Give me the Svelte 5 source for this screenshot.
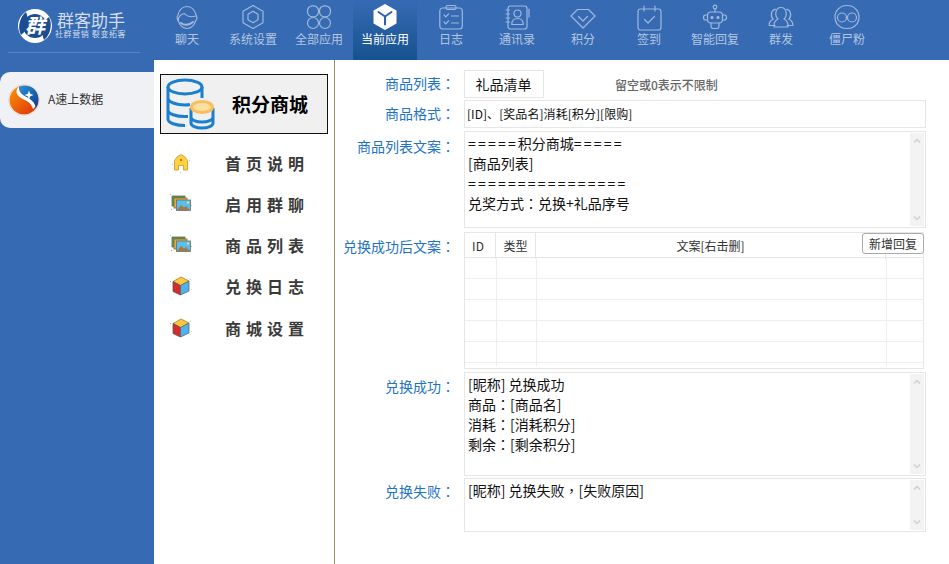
<script>
  const nav = [
    { id: 'chat', label: '聊天' }, { id: 'hex', label: '系统设置' }, { id: 'apps', label: '全部应用' },
    { id: 'cube', label: '当前应用', active: true }, { id: 'log', label: '日志' }, { id: 'book', label: '通讯录' },
    { id: 'gem', label: '积分' }, { id: 'cal', label: '签到' }, { id: 'bot', label: '智能回复' },
    { id: 'group', label: '群发' }, { id: 'skull', label: '僵尸粉' }
  ];
  const menu = [
    { icon: 'home', label: '首页说明' }, { icon: 'pics', label: '启用群聊' }, { icon: 'pics', label: '商品列表' },
    { icon: 'box', label: '兑换日志' }, { icon: 'box', label: '商城设置' }
  ];
  const rows = [1, 2, 3, 4, 5, 6];
</script>

<div class="app">
  <header class="top">
    <div class="brand">
      <div class="brand-in">
        <svg class="logo" width="36" height="36" viewBox="0 0 36 36">
          <circle cx="18" cy="18" r="17" fill="#fff" />
          <path d="M9 4C3 9 0 19 4 27c4-3 6-6 5-10 2-4 2-9 0-13zM27 32c6-5 9-15 5-23-4 3-6 6-5 10-2 4-2 9 0 13z" fill="#1c4d92" />
          <circle cx="18" cy="18" r="12" fill="#1c4d92" />
          <text x="18" y="25" text-anchor="middle" class="logo-ch">群</text>
        </svg>
        <div class="brand-text">
          <div class="brand-name">群客助手</div>
          <div class="brand-sub">社群营销 裂变拓客</div>
        </div>
      </div>
    </div>
    <nav class="nav">
      {#each nav as n}
        <div class="nav-item" class:active={n.active}>
          <svg width="28" height="28" viewBox="0 0 28 28" class="nav-ic">
            {#if n.id === 'chat'}
              <path d="M14 3.500C9 3.500 6 8 5 12 3.800 14 3.800 16 5.200 17.500 6.500 22 10 25.500 14 25.500S21.500 22 22.800 17.500C24.200 16 24.200 14 23 12 22 8 19 3.500 14 3.500z" />
              <path d="M5.200 17.500C5 14 8 11 11.500 10.500 13.500 13 18 14.500 23 13" />
              <path d="M8 20c3 2.500 8 2.500 12-1" stroke-width="2" />
            {:else if n.id === 'hex'}
              <path d="M14 2.500 24 8.200V19.800L14 25.500 4 19.800V8.200Z" />
              <path d="M14 8.300 19 11.200V16.800L14 19.700 9 16.800V11.200Z" />
            {:else if n.id === 'apps'}
              <rect x="2.500" y="2.800" width="11" height="11" rx="5" /><rect x="14.500" y="2.800" width="11" height="11" rx="5" />
              <circle cx="8" cy="20" r="5.500" /><circle cx="20" cy="20" r="5.500" />
            {:else if n.id === 'cube'}
              <path d="M14 2 24.500 8V20L14 26 3.500 20V8Z" fill="#fff" stroke="#fff" stroke-width="2" />
              <path d="M7.500 9 14 13.500 20.500 9M14 13.500V21.500" stroke="#2b64a8" stroke-width="2" />
            {:else if n.id === 'log'}
              <rect x="2.800" y="5" width="22.500" height="21" rx="3" /><rect x="9" y="2.500" width="10" height="4" rx="1.500" />
              <path d="M7 12l1.800 1.800L11.500 11M7 19l1.800 1.800 2.700-2.800M14.500 13h7M14.500 20h7" />
            {:else if n.id === 'book'}
              <rect x="5" y="3" width="19" height="23" rx="2.500" />
              <circle cx="14.500" cy="10.500" r="3.500" /><path d="M8.800 21.500c0-4 2-6 5.700-6s5.700 2 5.700 6z" />
              <path d="M3 7h3.500M3 11h3.500M3 15h3.500M3 19h3.500M26 6v8" />
            {:else if n.id === 'gem'}
              <path d="M8.500 6.500h11L26 13 14 25 2 13z" /><path d="M9.500 13.500 14 18l4.500-4.500" />
            {:else if n.id === 'cal'}
              <rect x="3" y="6" width="23" height="21" rx="2.500" /><path d="M9 3v5M20 3v5M9.500 16.500l3.500 3.500 6.500-6.500" />
            {:else if n.id === 'bot'}
              <circle cx="14" cy="4" r="1.800" /><path d="M14 6v3" />
              <rect x="6.500" y="9" width="15" height="11" rx="3.500" />
              <path d="M6.500 12H4.500C3 12 2.500 13 2.500 14.500S3 17 4.500 17H6.500M21.500 12h2c1.500 0 2 1 2 2.500s-.5 2.500-2 2.500h-2M10 20v3c0 1.500 1 2.500 2.500 2.500h3c1.500 0 2.500-1 2.500-2.500v-3" />
              <circle cx="11" cy="14.500" r="1" fill="#a9bfdd" /><circle cx="17" cy="14.500" r="1" fill="#a9bfdd" />
            {:else if n.id === 'group'}
              <path d="M8 22.500H2.200c-.5-3 1.500-5 4-6.200-3.200-3.200-2-9.800 2.300-10" />
              <path d="M20 22.500h5.800c.5-3-1.500-5-4-6.200 3.200-3.200 2-9.800-2.300-10" />
              <path d="M14 4.500c-6 0-6.500 8.500-3 11.500-3 1.500-4.500 3.500-4 8h14c.5-4.500-1-6.500-4-8 3.500-3 3-11.500-3-11.500z" />
            {:else if n.id === 'skull'}
              <path d="M8.500 24.500C4.500 22.500 2 18.500 2 14 2 7.500 7 2.500 14 2.500S26 7.500 26 14c0 4.500-2.500 8.500-6.500 10.500-1.500 1-3 1-5.500 1s-4 0-5.500-1z" />
              <circle cx="9" cy="14.500" r="4.500" /><circle cx="19" cy="14.500" r="4.500" />
            {/if}
          </svg>
          <span>{n.label}</span>
        </div>
      {/each}
    </nav>
  </header>

  <div class="body">
    <aside class="side">
      <div class="shop">
        <svg width="32" height="32" viewBox="0 0 32 32">
          <defs>
            <linearGradient id="og" x1="0" y1="0" x2="1" y2="1"><stop offset="0" stop-color="#fb9a05" /><stop offset="1" stop-color="#db2a0c" /></linearGradient>
            <linearGradient id="bg" x1="0" y1="0" x2="1" y2="1"><stop offset="0" stop-color="#2a94dc" /><stop offset="1" stop-color="#0b3d8c" /></linearGradient>
          </defs>
          <circle cx="16" cy="16" r="15.500" fill="#fff" stroke="#d9dce2" />
          <circle cx="16" cy="16" r="14.500" fill="url(#og)" />
          <path d="M11 3C16 .8 25 1 29 9c2.500 5 1.500 12-1.500 15C26 18 16 15 11 11 9 8 9 5 11 3z" fill="url(#bg)" />
          <path d="M11 2.500C7 6 8 11 13 14c5 2.800 10 4 12 11l2.500-2.500C26 16 19 13.500 15 11 12 9 10.500 6 11 2.500z" fill="#fff" />
          <path d="M21 6.500l1.200 3.300 3.300 1.200-3.300 1.200-1.200 3.300-1.200-3.300-3.300-1.200 3.300-1.200z" fill="#fff" />
        </svg>
        <span>A速上数据</span>
      </div>
    </aside>

    <section class="mid">
      <div class="title">
        <svg width="50" height="52" viewBox="0 0 50 52" fill="none" stroke="#1a7fcf" stroke-width="3">
          <ellipse cx="19" cy="9" rx="17" ry="7" />
          <path d="M2 9v32c0 4 8 6.500 17 6.500M36 9v11M2 20c0 4 8 7 17 7 2 0 3 0 5-.5M2 32c0 4 8 6.500 17 6.500h3" />
          <path d="M25 30v15c0 3 5 5 11 5s11-2 11-5V30M25 39c0 3 5 5 11 5s11-2 11-5" />
          <ellipse cx="36" cy="29" rx="10.500" ry="5.500" fill="#fbe0a4" stroke="#fdbd5c" />
        </svg>
        <strong>积分商城</strong>
      </div>
      <ul class="menu">
        {#each menu as m}
          <li>
            <svg width="22" height="22" viewBox="0 0 22 22">
              {#if m.icon === 'home'}
                <path d="M11 2.500 15 5 17.500 8.500V18H13.500V13.500H8.500V18H4.500V8.500L7 5Z" fill="#fdd13f" stroke="#c9962b" stroke-width=".8" />
                <rect x="10" y="7" width="2" height="2" fill="#b5842a" />
                <rect x="2" y="12" width="1" height="1" fill="#9bd5a6" /><rect x="19" y="8" width="1" height="1" fill="#9ccbee" /><rect x="10" y="20" width="1" height="1" fill="#a5dcc8" />
              {:else if m.icon === 'pics'}
                <rect x="2" y="3" width="13" height="10" fill="#4d9a4f" stroke="#6a6a5a" stroke-width=".8" />
                <rect x="4" y="5" width="13" height="10" fill="#eca83a" stroke="#7d6a3a" stroke-width=".8" />
                <rect x="6.500" y="7" width="14" height="10.500" fill="#58c0f0" stroke="#6b6b6b" stroke-width=".8" />
                <path d="M7 17l4-5 3 2.500 2-1.500 4 4z" fill="#a57a45" />
                <rect x="17" y="8.500" width="2" height="2" fill="#fbe04a" />
                <rect x="0" y="1" width="1" height="1" fill="#9ccbee" /><rect x="21" y="12" width="1" height="1" fill="#f3a98a" /><rect x="1" y="16" width="1" height="1" fill="#7cc784" />
              {:else}
                <path d="M3 6.500 11 2 19 6 10.500 10.500Z" fill="#fdc93c" stroke="#a98229" stroke-width=".8" />
                <path d="M3 6.500 10.500 10.500V20L3 16.500Z" fill="#d92a2a" stroke="#555" stroke-width=".8" />
                <path d="M10.500 10.500 19 6V16L10.500 20Z" fill="#4cb4ec" stroke="#666" stroke-width=".8" />
                <rect x="0" y="6" width="1" height="1" fill="#7cc784" /><rect x="20" y="4" width="1" height="1" fill="#9ccbee" /><rect x="21" y="14" width="1" height="1" fill="#f3cf7a" />
              {/if}
            </svg>
            <span>{m.label}</span>
          </li>
        {/each}
      </ul>
    </section>

    <main class="form">
      <div class="row r1">
        <label>商品列表<i>：</i></label>
        <div class="box list">礼品清单</div>
        <span class="hint">留空或0表示不限制</span>
      </div>
      <div class="row r2">
        <label>商品格式<i>：</i></label>
        <div class="box fmt">[ID]、[奖品名]消耗[积分][限购]</div>
      </div>
      <div class="row r3">
        <label>商品列表文案<i>：</i></label>
        <div class="box area">
          <div class="txt">
            <div><span class="eq">=====</span>积分商城<span class="eq">=====</span></div>
            <div>[商品列表]</div>
            <div><span class="eq">================</span></div>
            <div>兑奖方式<i>：</i>兑换+礼品序号</div>
          </div>
          <div class="bar"><svg viewBox="0 0 10 8"><path d="M1 6 5 2l4 4" /></svg><svg viewBox="0 0 10 8"><path d="M1 2l4 4 4-4" /></svg></div>
        </div>
      </div>
      <div class="row r4">
        <label>兑换成功后文案<i>：</i></label>
        <div class="table">
          <div class="thead">
            <span>ID</span><span>类型</span><span>文案[右击删]</span><span></span>
          </div>
          <div class="tbody">
            {#each rows as r}
              <div class="tr"><span></span><span></span><span></span><span></span></div>
            {/each}
          </div>
          <button class="add">新增回复</button>
        </div>
      </div>
      <div class="row r5">
        <label>兑换成功<i>：</i></label>
        <div class="box area">
          <div class="txt">
            <div>[昵称] 兑换成功</div>
            <div>商品<i>：</i>[商品名]</div>
            <div>消耗<i>：</i>[消耗积分]</div>
            <div>剩余<i>：</i>[剩余积分]</div>
          </div>
          <div class="bar"><svg viewBox="0 0 10 8"><path d="M1 6 5 2l4 4" /></svg><svg viewBox="0 0 10 8"><path d="M1 2l4 4 4-4" /></svg></div>
        </div>
      </div>
      <div class="row r6">
        <label>兑换失败<i>：</i></label>
        <div class="box area">
          <div class="txt">
            <div>[昵称] 兑换失败<i>，</i>[失败原因]</div>
          </div>
          <div class="bar"><svg viewBox="0 0 10 8"><path d="M1 6 5 2l4 4" /></svg><svg viewBox="0 0 10 8"><path d="M1 2l4 4 4-4" /></svg></div>
        </div>
      </div>
    </main>
  </div>
</div>

<style>
  :global(body) { margin: 0; background: #fff; }
  .app {
    width: 949px; height: 564px; overflow: hidden; display: flex; flex-direction: column;
    font-family: "Noto Sans CJK SC", "Liberation Sans", sans-serif; color: #111;
  }
  i { font-style: normal; font-family: "Noto Sans CJK TC", sans-serif; }

  .top { height: 60px; background: #366bb3; display: flex; flex: none; }
  .brand { width: 154px; flex: none; box-sizing: border-box; padding: 8px 14px 0 8px; }
  .brand-in { height: 45px; border-bottom: 1px solid #5684c2; display: flex; gap: 2px; padding-left: 9px; box-sizing: border-box; width: 132px; }
  .logo { flex: none; }
  .logo-ch { font-size: 20px; fill: #fff; font-weight: 700; font-style: italic; font-family: "Noto Sans CJK SC", sans-serif; }
  .brand-text { white-space: nowrap; color: #d3dded; }
  .brand-name { font-size: 17px; line-height: 18px; margin: 3px 0 0 2px; }
  .brand-sub { font-size: 8px; line-height: 10px; letter-spacing: .6px; }

  .nav { display: flex; margin-left: 1px; }
  .nav-item {
    width: 64px; margin-right: 2px; display: flex; flex-direction: column; align-items: center;
    padding-top: 3px; box-sizing: border-box; color: #b4c6e0; font-size: 12px; white-space: nowrap;
  }
  .nav-item span { line-height: 16px; display: block; }
  .nav-ic { fill: none; stroke: #a0b8da; stroke-width: 1.200; stroke-linejoin: round; stroke-linecap: round; display: block; }
  .nav-item.active { color: #fff; background: linear-gradient(#366bb3, #16528f); }

  .body { flex: 1; display: flex; min-height: 0; }
  .side { width: 154px; flex: none; background: #366bb3; padding-top: 12px; box-sizing: border-box; }
  .shop {
    height: 56px; background: #f0f1f5; border-radius: 10px 0 0 10px; display: flex; align-items: center;
    padding-left: 8px; gap: 8px; font-size: 12px; color: #333; box-sizing: border-box;
  }
  .shop svg { flex: none; }
  .shop span { margin-bottom: 3px; }

  .mid { width: 181px; flex: none; box-sizing: border-box; border-right: 1px solid #9b9168; padding: 14px 6px 0; }
  .title {
    height: 60px; box-sizing: border-box; width: 168px; border: 1px solid #111; background: #f0f0f0;
    display: flex; align-items: center; padding-left: 5px;
  }
  .title svg { flex: none; }
  .title strong { margin: 0 0 2px 16px; font-size: 19px; font-weight: 700; color: #000; white-space: nowrap; }
  .menu { list-style: none; margin: 8px 0 0; padding: 0; }
  .menu li { height: 41px; display: flex; align-items: center; padding-left: 10px; }
  .menu li:last-child { margin-top: 1px; }
  .menu svg { flex: none; }
  .menu span { margin-left: 33px; font-size: 16px; font-weight: 700; letter-spacing: 5px; color: #3a3a3a; white-space: nowrap; }

  .form { flex: 1; min-width: 0; padding-top: 10px; box-sizing: border-box; font-size: 14px; }
  .row { display: flex; }
  label { width: 120px; flex: none; text-align: right; color: #2273c3; font-size: 14px; line-height: 20px; margin-right: 9px; white-space: nowrap; }
  .box { border: 1px solid #e6e6e6; box-sizing: border-box; background: #fff; }
  .r1 { height: 28px; margin-bottom: 2px; align-items: center; }
  .r1 label { margin-bottom: 3px; }
  .list { width: 80px; height: 28px; line-height: 26px; text-align: center; padding-right: 1px; }
  .hint { margin-left: 71px; font-size: 12px; color: #666; font-weight: 500; }
  .r2 { height: 28px; margin-bottom: 3px; align-items: center; }
  .r2 label { margin-bottom: 2px; }
  .fmt { width: 462px; height: 28px; font-size: 12px; letter-spacing: .06px; line-height: 26px; padding-left: 2px; white-space: nowrap; }
  .r3 { height: 97px; margin-bottom: 4px; }
  .r3 label { margin-top: 5px; }
  .r4 { height: 137px; margin-bottom: 3px; }
  .r4 label { margin-top: 4px; }
  .r5 { height: 104px; margin-bottom: 2px; }
  .r5 label { margin-top: 4px; }
  .r6 { height: 54px; }
  .r6 label { margin-top: 3px; }

  .area { width: 462px; display: flex; }
  .txt { flex: 1; padding: 1px 0 0 3px; line-height: 20px; white-space: nowrap; }
  .eq { letter-spacing: 2.200px; }
  .bar {
    width: 14px; flex: none; margin: 1px 1px 1px 0; background: #f3f3f3; display: flex; flex-direction: column;
    justify-content: space-between; align-items: center; padding: 5px 0; box-sizing: border-box;
  }
  .bar svg { width: 8px; height: 6px; fill: none; stroke: #cfcfcf; stroke-width: 2; display: block; }

  .table { position: relative; width: 460px; height: 137px; box-sizing: border-box; border: 1px solid #e6e6e6; font-size: 12px; color: #333; }
  .thead { display: grid; grid-template-columns: 31px 40px 350px 1fr; height: 24px; border-bottom: 1px solid #e6e6e6; box-sizing: content-box; }
  .thead span { text-align: center; line-height: 26px; border-right: 1px solid #e6e6e6; box-sizing: border-box; }
  .thead span:first-child { padding-right: 4px; }
  .thead span:last-child { border-right: 0; }
  .tbody { height: 108px; overflow: hidden; }
  .tr { display: grid; grid-template-columns: 32px 40px 350px 1fr; height: 21px; box-sizing: border-box; border-bottom: 1px solid #eee; }
  .tr span { border-right: 1px solid #eee; }
  .tr span:last-child { border-right: 0; }
  .add {
    position: absolute; top: 0; right: -1px; width: 62px; height: 21px; padding: 0; background: #fff;
    border: 1px solid #aaa; border-radius: 3px; font: inherit; font-size: 12px; color: #333; line-height: 19px;
  }
</style>
